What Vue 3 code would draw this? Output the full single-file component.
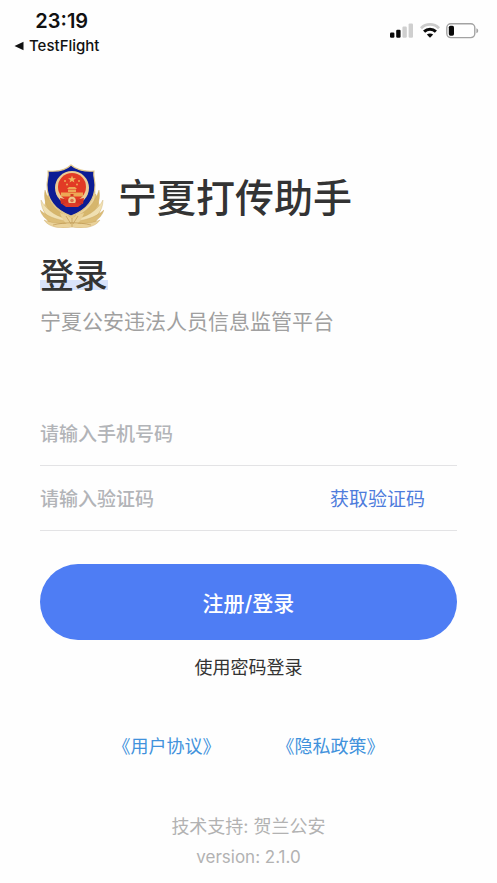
<script setup>
import { ref } from 'vue'

const phone = ref('')
const code = ref('')

// Feathers of the emblem's gold wreath, drawn on the left and mirrored on the right.
const feathers = [
  { d: 'M25 56C12 50 5 33 11 19C13 32 20 44 29 51Z', fill: '#ead39b' },
  { d: 'M27 58C13 54 2 42 5 26C9 39 18 49 30 53Z', fill: '#d6b66c' },
  { d: 'M28 60C14 60 1 51 1 36C7 47 18 54 31 55Z', fill: '#f0e0b2' },
  { d: 'M31 61C18 64 4 58 0 46C9 54 21 57 32 57Z', fill: '#dcbd77' },
  { d: 'M32 63C22 65 9 64 4 56C14 60 24 60 32 59Z', fill: '#ead29a' },
]
</script>

<template>
  <div class="page">
    <header class="status">
      <div class="status-left">
        <span class="time">23:19</span>
        <a class="back" href="#">
          <svg width="10" height="10" viewBox="0 0 10 10" aria-hidden="true">
            <path d="M0.5 5L9.5 0.7V9.3Z" fill="#111" />
          </svg>
          <span>TestFlight</span>
        </a>
      </div>
      <div class="status-icons" aria-hidden="true">
        <svg width="24" height="16" viewBox="0 0 24 16">
          <rect x="0" y="9.6" width="4.4" height="5.2" rx="1.2" fill="#0a0a0a" />
          <rect x="6.2" y="6.8" width="4.4" height="8" rx="1.2" fill="#0a0a0a" />
          <rect x="12.4" y="3.6" width="4.4" height="11.2" rx="1.2" fill="#cfcfcf" />
          <rect x="18.6" y="0.4" width="4.4" height="14.4" rx="1.2" fill="#cfcfcf" />
        </svg>
        <svg width="20" height="16" viewBox="0 0 20 16" fill="none">
          <path d="M1 5.2C6 0.2 14 0.2 19 5.2" stroke="#cbcbcb" stroke-width="2.8" />
          <path d="M4.1 8.6C7.4 5.4 12.6 5.4 15.9 8.6" stroke="#0a0a0a" stroke-width="3" />
          <path d="M10 14.8L6.8 11.6C8.6 10 11.4 10 13.2 11.6Z" fill="#0a0a0a" />
        </svg>
        <svg width="33" height="16" viewBox="0 0 33 16">
          <rect x="0.8" y="0.8" width="28" height="13.8" rx="4" fill="#fff" stroke="#a3a3a3" stroke-width="1.4" />
          <rect x="2.8" y="2.7" width="5.2" height="10" rx="1.6" fill="#0a0a0a" />
          <path d="M30.4 5.2C32.8 6.2 32.8 9.2 30.4 10.2Z" fill="#a3a3a3" />
        </svg>
      </div>
    </header>

    <main class="content">
      <div class="brand">
        <svg class="emblem" viewBox="0 0 64 64" aria-hidden="true">
          <path d="M8 30L3 45L8 58L22 63H42L56 58L61 45L56 30Z" fill="#e2c684" />
          <g v-for="side in ['left', 'right']" :key="side" :transform="side === 'right' ? 'translate(64 0) scale(-1 1)' : undefined">
            <path v-for="f in feathers" :key="f.d" :d="f.d" :fill="f.fill" stroke="#c39d55" stroke-width="0.3" />
          </g>
          <path d="M31 1C27 5 19 8 8 7C9 12 7 16 7 21C7 36 15 46 31 52C47 46 55 36 55 21C55 16 53 12 54 7C44 8 35 5 31 1Z" fill="#0b1c94" stroke="#e2c88a" stroke-width="1.1" />
          <circle cx="32" cy="24" r="17" fill="#ebcb94" />
          <circle cx="32" cy="23" r="14" fill="#e23a25" />
          <path d="M32 11.5L33 14.2H36L33.6 15.9L34.5 18.6L32 17L29.5 18.6L30.4 15.9L28 14.2H31Z" fill="#f0b860" />
          <g fill="#eda855">
            <circle cx="25" cy="17" r="1" /><circle cx="39" cy="17" r="1" />
            <circle cx="27" cy="20.5" r="1" /><circle cx="37" cy="20.5" r="1" />
            <path d="M27 25L29 23H35L37 25ZM28 25.6H36V28H28ZM21 28.6H43V32.5H21Z" />
          </g>
          <path d="M30.5 30H33.5V32.5H30.5Z" fill="#d33a26" />
          <path d="M20 34C28 36 36 36 44 34L43 40C39 39 36 41 32 40C28 41 25 39 21 40Z" fill="#d43322" />
          <circle cx="32" cy="36.5" r="3.8" fill="#edc78a" />
          <circle cx="32" cy="36.5" r="1.8" fill="#dd6d47" />
          <path d="M22 40C27 38.8 37 38.8 42 40L38 43H26Z" fill="#dc3b28" />
          <path d="M20 49C26 50 29 52 32 55C35 52 38 50 44 49C42 56 37 61 32 63.5C27 61 22 56 20 49Z" fill="#e8d096" />
          <path d="M32 54V63M26 52L31 60M38 52L33 60M13 61C25 58 39 58 51 61" fill="none" stroke="#b9914a" stroke-width="0.6" />
        </svg>
        <h1 class="title">宁夏打传助手</h1>
      </div>

      <h2 class="heading">登录</h2>
      <p class="subtitle">宁夏公安违法人员信息监管平台</p>

      <form class="form" @submit.prevent>
        <div class="field">
          <input v-model="phone" class="input" type="tel" aria-label="请输入手机号码" placeholder="请输入手机号码" />
        </div>
        <div class="field">
          <input v-model="code" class="input" type="text" inputmode="numeric" aria-label="请输入验证码" placeholder="请输入验证码" />
          <button class="get-code" type="button">获取验证码</button>
        </div>
        <button class="submit" type="submit">注册/登录</button>
        <button class="switch" type="button">使用密码登录</button>
      </form>

      <nav class="policies">
        <a href="#">《用户协议》</a>
        <a href="#">《隐私政策》</a>
      </nav>

      <footer class="footer">
        <p>技术支持: 贺兰公安</p>
        <p class="version">version: 2.1.0</p>
      </footer>
    </main>
  </div>
</template>

<style>
body {
  margin: 0;
  background: #fefefe;
}
</style>

<style scoped>
.page {
  color: #333;
  font-family: Inter, "Noto Sans CJK SC", sans-serif;
}

.page * {
  box-sizing: border-box;
}

.status {
  display: flex;
  justify-content: space-between;
  padding: 8px 18px 0 14px;
}

.status-left {
  display: flex;
  flex-direction: column;
  align-items: center;
}

.time {
  padding-left: 10px;
  color: #111;
  font-size: 20px;
  font-weight: 600;
  line-height: 26px;
}

.back {
  display: flex;
  align-items: center;
  gap: 5px;
  color: #111;
  font-size: 15px;
  font-weight: 500;
  line-height: 24px;
  text-decoration: none;
}

.status-icons {
  display: flex;
  gap: 6px;
  padding-top: 15px;
}

.content {
  padding: 0 40px;
}

.brand {
  display: flex;
  align-items: center;
  gap: 14px;
  margin-top: 106px;
}

.emblem {
  flex: none;
  width: 64px;
  height: 64px;
}

h1,
h2,
p {
  margin: 0;
}

.title {
  padding-top: 4px;
  font-size: 39px;
  font-weight: 500;
  line-height: 60px;
}

.heading {
  width: fit-content;
  margin-top: 28px;
  background: linear-gradient(#d8e2fb, #d8e2fb) 0 24px / 100% 10px no-repeat;
  font-size: 34px;
  font-weight: 500;
  line-height: 40px;
}

.subtitle {
  margin-top: 11px;
  color: #a0a0a0;
  font-size: 21px;
  font-weight: 400;
  line-height: 30px;
}

.form {
  display: flex;
  flex-direction: column;
  margin-top: 64px;
}

.field {
  display: flex;
  align-items: center;
  height: 65px;
  padding-top: 4px;
  border-bottom: 1px solid #e3e3e5;
}

.input {
  flex: 1;
  min-width: 0;
  padding: 0;
  border: 0;
  outline: 0;
  background: none;
  color: #333;
  font: 500 19px/28px Inter, "Noto Sans CJK SC", sans-serif;
}

.input::placeholder {
  color: #b2b4b8;
  opacity: 1;
}

button {
  padding: 0;
  border: 0;
  background: none;
  font-family: inherit;
  cursor: pointer;
}

.get-code {
  margin-right: 32px;
  color: #4e7cdc;
  font-size: 19px;
  line-height: 28px;
}

.submit {
  height: 76px;
  margin-top: 33px;
  border-radius: 38px;
  background: #4e7df4;
  color: #fff;
  font-size: 21px;
  font-weight: 500;
}

.switch {
  align-self: center;
  margin-top: 14px;
  color: #333;
  font-size: 18px;
  line-height: 28px;
}

.policies {
  display: flex;
  justify-content: center;
  gap: 56px;
  margin-top: 51px;
  font-size: 18px;
  line-height: 28px;
}

.policies a {
  color: #4192dc;
  text-decoration: none;
}

.footer {
  margin-top: 50px;
  color: #b2b2b2;
  font-size: 18px;
  line-height: 31px;
  text-align: center;
}

.version {
  font-size: 17px;
}
</style>
